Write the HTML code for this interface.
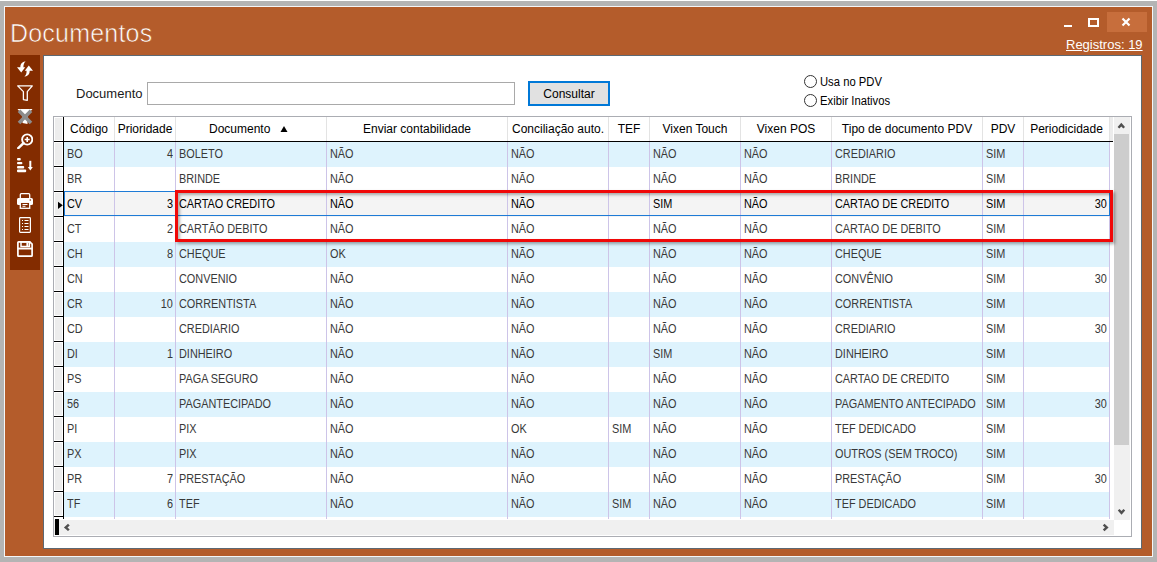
<!DOCTYPE html>
<html><head><meta charset="utf-8">
<style>
*{margin:0;padding:0;box-sizing:border-box;}
html,body{width:1157px;height:562px;overflow:hidden;background:#b4b4b4;font-family:"Liberation Sans",sans-serif;}
.a{position:absolute;}
#win{left:4px;top:6px;width:1149px;height:551px;border:1px solid #f4f6f8;background:#b45c2b;}
#title{left:10px;top:16.5px;font-size:25px;letter-spacing:0.2px;color:#fff;line-height:32px;white-space:nowrap;-webkit-text-stroke:0.6px #b45c2b;}
#reg{left:1066px;top:37px;font-size:13px;color:#fff;line-height:15px;text-decoration:underline;white-space:nowrap;}
#side{left:10px;top:55px;width:30px;height:215px;background:#832c00;}
#panel{left:43px;top:55px;width:1099px;height:494px;background:#fff;border:1px solid #5d6872;}
.lbl{font-size:13px;color:#1a1a1a;white-space:nowrap;line-height:15px;}
.cell{font-size:12.5px;color:#383838;white-space:nowrap;line-height:14px;}
.cell span{display:inline-block;transform:scaleX(0.87);transform-origin:0 0;}
.cell.r span{transform-origin:100% 0;}
.hd{font-size:12px;color:#000;white-space:nowrap;line-height:14px;text-align:center;}
</style></head><body>
<div class="a" style="left:0;top:0;width:1157px;height:1px;background:#fff;"></div>
<div id="win" class="a"></div>
<div id="title" class="a">Documentos</div>
<div id="reg" class="a">Registros: 19</div>

<div class="a" style="left:1107px;top:12px;width:40px;height:20px;background:#c76e3c;"></div>
<div class="a" style="left:1064px;top:25px;width:8px;height:2px;background:#fff;"></div>
<div class="a" style="left:1088px;top:18px;width:11px;height:9px;border:2px solid #fff;border-width:2px 2px 2px 2px;"></div>
<svg class="a" style="left:1121px;top:17px" width="10" height="10" viewBox="0 0 10 10"><path d="M1.5 1.5L8.5 8.5M8.5 1.5L1.5 8.5" stroke="#fff" stroke-width="2.2"/></svg>
<div id="side" class="a"></div>
<svg class="a" style="left:17px;top:61px" width="16" height="16" viewBox="0 0 16 16">
<path d="M8.6 0.2 C5 1, 3.2 3, 3.3 6.3 L0 6.3 L4.2 11.4 L8.2 6.3 L6.4 6.3 C6.4 3.5, 7 2, 8.6 0.2 Z" fill="#fff"/>
<path d="M7.4 15.8 C11 15, 12.8 13, 12.7 9.7 L16 9.7 L11.8 4.6 L7.8 9.7 L9.6 9.7 C9.6 12.5, 9 14, 7.4 15.8 Z" fill="#fff"/>
</svg>
<svg class="a" style="left:17px;top:85px" width="16" height="16" viewBox="0 0 16 16">
<path d="M0.7 0.9 H15.3 L10.3 6.6 V15.3 L6.4 14.6 V6.6 Z" fill="none" stroke="#fff" stroke-width="1.3" stroke-linejoin="round"/>
</svg>
<svg class="a" style="left:17px;top:109px" width="16" height="16" viewBox="0 0 16 16">
<path d="M0.5 0 H15.5 L10.5 6 V15 L5.5 14 V6 Z" fill="#fff"/>
<path d="M2 1.8 L14 14 M14 1.8 L2 14" stroke="#8c8c8c" stroke-width="3.6"/>
</svg>
<svg class="a" style="left:17px;top:133px" width="16" height="16" viewBox="0 0 16 16">
<circle cx="10.2" cy="6.5" r="5.1" fill="none" stroke="#fff" stroke-width="1.9"/>
<path d="M10.2 4 V9 M7.7 6.5 H12.7" stroke="#fff" stroke-width="1.6"/>
<path d="M6.5 10.1 L1.3 15.1" stroke="#fff" stroke-width="2.5" stroke-linecap="round"/>
</svg>
<svg class="a" style="left:17px;top:157px" width="16" height="16" viewBox="0 0 16 16">
<rect x="0" y="1" width="3.8" height="2.4" rx="1" fill="#fff"/>
<rect x="0" y="4.9" width="5.4" height="2.4" rx="1" fill="#fff"/>
<rect x="0" y="9" width="7.2" height="2.4" rx="1" fill="#fff"/>
<rect x="0" y="12.6" width="9.2" height="2.6" rx="1" fill="#fff"/>
<path d="M13.3 3.8 V11" stroke="#fff" stroke-width="2"/>
<path d="M10.8 10 L13.3 13.5 L15.8 10 Z" fill="#fff"/>
</svg>
<svg class="a" style="left:17px;top:193px" width="16" height="16" viewBox="0 0 16 16">
<rect x="3.3" y="0.7" width="9.4" height="6" rx="1" fill="none" stroke="#fff" stroke-width="1.3"/>
<rect x="0" y="5" width="16" height="7" rx="1.5" fill="#fff"/>
<rect x="3.3" y="9.3" width="9.4" height="6" fill="#832c00" stroke="#fff" stroke-width="1.3"/>
<path d="M5.5 11.5 H10.5 M5.5 13.3 H8.5" stroke="#fff" stroke-width="1"/>
<circle cx="13.3" cy="7" r="0.8" fill="#832c00"/>
</svg>
<svg class="a" style="left:17px;top:217px" width="16" height="16" viewBox="0 0 16 16">
<rect x="2.6" y="0.6" width="10.8" height="14.8" rx="0.8" fill="none" stroke="#fff" stroke-width="1.2"/>
<path d="M5 3.5 H6 M7.5 3.5 H11.5 M5 6.5 H6 M7.5 6.5 H11.5 M5 9.5 H6 M7.5 9.5 H11.5 M5 12.5 H6 M7.5 12.5 H11.5" stroke="#fff" stroke-width="1.1"/>
</svg>
<svg class="a" style="left:17px;top:241px" width="16" height="16" viewBox="0 0 16 16">
<path d="M1.6 0.9 H12.8 L15.1 3.2 V14.4 Q15.1 15.1 14.4 15.1 H1.6 Q0.9 15.1 0.9 14.4 V1.6 Q0.9 0.9 1.6 0.9Z" fill="none" stroke="#fff" stroke-width="1.7"/>
<rect x="4" y="0.9" width="8.4" height="4.6" fill="none" stroke="#fff" stroke-width="1.5"/>
<rect x="9.4" y="1.6" width="1.9" height="3.4" fill="#fff"/>
<rect x="0.9" y="6.6" width="14.2" height="1.9" fill="#fff"/>
</svg>
<div id="panel" class="a"></div>
<div class="a lbl" style="left:76px;top:86px;">Documento</div>
<div class="a" style="left:147px;top:82px;width:368px;height:23px;border:1px solid #a9a9a9;background:#fff;"></div>
<div class="a" style="left:528px;top:81px;width:82px;height:25px;border:2px solid #0078d7;background:#e1e1e1;"></div>
<div class="a" style="left:528px;top:87px;width:82px;text-align:center;font-size:12px;line-height:15px;color:#000;">Consultar</div>
<div class="a" style="left:804px;top:75px;width:13px;height:13px;border:1px solid #333;border-radius:50%;background:#fff;"></div>
<div class="a" style="left:820px;top:75px;font-size:12.5px;line-height:15px;color:#000;white-space:nowrap;transform:scaleX(0.9);transform-origin:0 0;">Usa no PDV</div>
<div class="a" style="left:804px;top:94px;width:13px;height:13px;border:1px solid #333;border-radius:50%;background:#fff;"></div>
<div class="a" style="left:820px;top:94px;font-size:12.5px;line-height:15px;color:#000;white-space:nowrap;transform:scaleX(0.9);transform-origin:0 0;">Exibir Inativos</div>
<div class="a" style="left:53px;top:116px;width:1079px;height:421px;border:1px solid #abadb3;background:#fff;"></div>
<div class="a" style="left:54px;top:117px;width:9px;height:402px;background:#fff;"></div>
<div class="a" style="left:54px;top:117px;width:9px;height:24px;background:#ededed;border:1px solid #fff;"></div>
<div class="a" style="left:63px;top:117px;width:1px;height:402px;background:#000;"></div>
<div class="a" style="left:54px;top:141px;width:1059px;height:1px;background:#000;"></div>
<div class="a" style="left:1110px;top:117px;width:3px;height:24px;background:#ececec;"></div>
<div class="a hd" style="left:64px;top:122px;width:50px;">Código</div>
<div class="a" style="left:114px;top:117px;width:1px;height:24px;background:#e3e3e3;"></div>
<div class="a hd" style="left:115px;top:122px;width:60px;">Prioridade</div>
<div class="a" style="left:175px;top:117px;width:1px;height:24px;background:#e3e3e3;"></div>
<div class="a hd" style="left:209px;top:122px;text-align:left;">Documento</div>
<div class="a" style="left:326px;top:117px;width:1px;height:24px;background:#e3e3e3;"></div>
<div class="a hd" style="left:327px;top:122px;width:180px;">Enviar contabilidade</div>
<div class="a" style="left:507px;top:117px;width:1px;height:24px;background:#e3e3e3;"></div>
<div class="a hd" style="left:508px;top:122px;width:100px;">Conciliação auto.</div>
<div class="a" style="left:608px;top:117px;width:1px;height:24px;background:#e3e3e3;"></div>
<div class="a hd" style="left:609px;top:122px;width:40px;">TEF</div>
<div class="a" style="left:649px;top:117px;width:1px;height:24px;background:#e3e3e3;"></div>
<div class="a hd" style="left:650px;top:122px;width:90px;">Vixen Touch</div>
<div class="a" style="left:740px;top:117px;width:1px;height:24px;background:#e3e3e3;"></div>
<div class="a hd" style="left:741px;top:122px;width:90px;">Vixen POS</div>
<div class="a" style="left:831px;top:117px;width:1px;height:24px;background:#e3e3e3;"></div>
<div class="a hd" style="left:832px;top:122px;width:150px;">Tipo de documento PDV</div>
<div class="a" style="left:982px;top:117px;width:1px;height:24px;background:#e3e3e3;"></div>
<div class="a hd" style="left:983px;top:122px;width:40px;">PDV</div>
<div class="a" style="left:1023px;top:117px;width:1px;height:24px;background:#e3e3e3;"></div>
<div class="a hd" style="left:1024px;top:122px;width:85px;">Periodicidade</div>
<div class="a" style="left:1109px;top:117px;width:1px;height:24px;background:#e3e3e3;"></div>
<svg class="a" style="left:280px;top:126px" width="8" height="6" viewBox="0 0 8 6"><path d="M4 0 L7.5 6 H0.5Z" fill="#000"/></svg>
<div class="a" style="left:64px;top:142px;width:1045px;height:25px;background:#def3fd;"></div>
<div class="a" style="left:54px;top:142px;width:9px;height:24px;background:#ededed;border:1px solid #fff;"></div>
<div class="a" style="left:54px;top:166px;width:9px;height:1px;background:#000;"></div>
<div class="a cell" style="left:66.5px;top:147px;width:48px;color:#383838;"><span>BO</span></div>
<div class="a cell r" style="left:115px;top:147px;width:58px;text-align:right;color:#383838;"><span>4</span></div>
<div class="a cell" style="left:178.5px;top:147px;width:148px;color:#383838;"><span>BOLETO</span></div>
<div class="a cell" style="left:329.5px;top:147px;width:178px;color:#383838;"><span>NÃO</span></div>
<div class="a cell" style="left:510.5px;top:147px;width:98px;color:#383838;"><span>NÃO</span></div>
<div class="a cell" style="left:652.5px;top:147px;width:88px;color:#383838;"><span>NÃO</span></div>
<div class="a cell" style="left:743.5px;top:147px;width:88px;color:#383838;"><span>NÃO</span></div>
<div class="a cell" style="left:834.5px;top:147px;width:148px;color:#383838;"><span>CREDIARIO</span></div>
<div class="a cell" style="left:985.5px;top:147px;width:38px;color:#383838;"><span>SIM</span></div>
<div class="a" style="left:64px;top:167px;width:1045px;height:25px;background:#ffffff;"></div>
<div class="a" style="left:54px;top:167px;width:9px;height:24px;background:#ededed;border:1px solid #fff;"></div>
<div class="a" style="left:54px;top:191px;width:9px;height:1px;background:#000;"></div>
<div class="a cell" style="left:66.5px;top:172px;width:48px;color:#383838;"><span>BR</span></div>
<div class="a cell" style="left:178.5px;top:172px;width:148px;color:#383838;"><span>BRINDE</span></div>
<div class="a cell" style="left:329.5px;top:172px;width:178px;color:#383838;"><span>NÃO</span></div>
<div class="a cell" style="left:510.5px;top:172px;width:98px;color:#383838;"><span>NÃO</span></div>
<div class="a cell" style="left:652.5px;top:172px;width:88px;color:#383838;"><span>NÃO</span></div>
<div class="a cell" style="left:743.5px;top:172px;width:88px;color:#383838;"><span>NÃO</span></div>
<div class="a cell" style="left:834.5px;top:172px;width:148px;color:#383838;"><span>BRINDE</span></div>
<div class="a cell" style="left:985.5px;top:172px;width:38px;color:#383838;"><span>SIM</span></div>
<div class="a" style="left:64px;top:192px;width:1045px;height:25px;background:#f4f4f4;"></div>
<div class="a" style="left:54px;top:192px;width:9px;height:24px;background:#ededed;border:1px solid #fff;"></div>
<div class="a" style="left:54px;top:216px;width:9px;height:1px;background:#000;"></div>
<div class="a cell" style="left:66.5px;top:197px;width:48px;color:#000;"><span>CV</span></div>
<div class="a cell r" style="left:115px;top:197px;width:58px;text-align:right;color:#000;"><span>3</span></div>
<div class="a cell" style="left:178.5px;top:197px;width:148px;color:#000;"><span>CARTAO CREDITO</span></div>
<div class="a cell" style="left:329.5px;top:197px;width:178px;color:#000;"><span>NÃO</span></div>
<div class="a cell" style="left:510.5px;top:197px;width:98px;color:#000;"><span>NÃO</span></div>
<div class="a cell" style="left:652.5px;top:197px;width:88px;color:#000;"><span>SIM</span></div>
<div class="a cell" style="left:743.5px;top:197px;width:88px;color:#000;"><span>NÃO</span></div>
<div class="a cell" style="left:834.5px;top:197px;width:148px;color:#000;"><span>CARTAO DE CREDITO</span></div>
<div class="a cell" style="left:985.5px;top:197px;width:38px;color:#000;"><span>SIM</span></div>
<div class="a cell r" style="left:1024px;top:197px;width:83px;text-align:right;color:#000;"><span>30</span></div>
<div class="a" style="left:64px;top:217px;width:1045px;height:25px;background:#ffffff;"></div>
<div class="a" style="left:54px;top:217px;width:9px;height:24px;background:#ededed;border:1px solid #fff;"></div>
<div class="a" style="left:54px;top:241px;width:9px;height:1px;background:#000;"></div>
<div class="a cell" style="left:66.5px;top:222px;width:48px;color:#383838;"><span>CT</span></div>
<div class="a cell r" style="left:115px;top:222px;width:58px;text-align:right;color:#383838;"><span>2</span></div>
<div class="a cell" style="left:178.5px;top:222px;width:148px;color:#383838;"><span>CARTÃO DEBITO</span></div>
<div class="a cell" style="left:329.5px;top:222px;width:178px;color:#383838;"><span>NÃO</span></div>
<div class="a cell" style="left:510.5px;top:222px;width:98px;color:#383838;"><span>NÃO</span></div>
<div class="a cell" style="left:652.5px;top:222px;width:88px;color:#383838;"><span>NÃO</span></div>
<div class="a cell" style="left:743.5px;top:222px;width:88px;color:#383838;"><span>NÃO</span></div>
<div class="a cell" style="left:834.5px;top:222px;width:148px;color:#383838;"><span>CARTAO DE DEBITO</span></div>
<div class="a cell" style="left:985.5px;top:222px;width:38px;color:#383838;"><span>SIM</span></div>
<div class="a" style="left:64px;top:242px;width:1045px;height:25px;background:#def3fd;"></div>
<div class="a" style="left:54px;top:242px;width:9px;height:24px;background:#ededed;border:1px solid #fff;"></div>
<div class="a" style="left:54px;top:266px;width:9px;height:1px;background:#000;"></div>
<div class="a cell" style="left:66.5px;top:247px;width:48px;color:#383838;"><span>CH</span></div>
<div class="a cell r" style="left:115px;top:247px;width:58px;text-align:right;color:#383838;"><span>8</span></div>
<div class="a cell" style="left:178.5px;top:247px;width:148px;color:#383838;"><span>CHEQUE</span></div>
<div class="a cell" style="left:329.5px;top:247px;width:178px;color:#383838;"><span>OK</span></div>
<div class="a cell" style="left:510.5px;top:247px;width:98px;color:#383838;"><span>NÃO</span></div>
<div class="a cell" style="left:652.5px;top:247px;width:88px;color:#383838;"><span>NÃO</span></div>
<div class="a cell" style="left:743.5px;top:247px;width:88px;color:#383838;"><span>NÃO</span></div>
<div class="a cell" style="left:834.5px;top:247px;width:148px;color:#383838;"><span>CHEQUE</span></div>
<div class="a cell" style="left:985.5px;top:247px;width:38px;color:#383838;"><span>SIM</span></div>
<div class="a" style="left:64px;top:267px;width:1045px;height:25px;background:#ffffff;"></div>
<div class="a" style="left:54px;top:267px;width:9px;height:24px;background:#ededed;border:1px solid #fff;"></div>
<div class="a" style="left:54px;top:291px;width:9px;height:1px;background:#000;"></div>
<div class="a cell" style="left:66.5px;top:272px;width:48px;color:#383838;"><span>CN</span></div>
<div class="a cell" style="left:178.5px;top:272px;width:148px;color:#383838;"><span>CONVENIO</span></div>
<div class="a cell" style="left:329.5px;top:272px;width:178px;color:#383838;"><span>NÃO</span></div>
<div class="a cell" style="left:510.5px;top:272px;width:98px;color:#383838;"><span>NÃO</span></div>
<div class="a cell" style="left:652.5px;top:272px;width:88px;color:#383838;"><span>NÃO</span></div>
<div class="a cell" style="left:743.5px;top:272px;width:88px;color:#383838;"><span>NÃO</span></div>
<div class="a cell" style="left:834.5px;top:272px;width:148px;color:#383838;"><span>CONVÊNIO</span></div>
<div class="a cell" style="left:985.5px;top:272px;width:38px;color:#383838;"><span>SIM</span></div>
<div class="a cell r" style="left:1024px;top:272px;width:83px;text-align:right;color:#383838;"><span>30</span></div>
<div class="a" style="left:64px;top:292px;width:1045px;height:25px;background:#def3fd;"></div>
<div class="a" style="left:54px;top:292px;width:9px;height:24px;background:#ededed;border:1px solid #fff;"></div>
<div class="a" style="left:54px;top:316px;width:9px;height:1px;background:#000;"></div>
<div class="a cell" style="left:66.5px;top:297px;width:48px;color:#383838;"><span>CR</span></div>
<div class="a cell r" style="left:115px;top:297px;width:58px;text-align:right;color:#383838;"><span>10</span></div>
<div class="a cell" style="left:178.5px;top:297px;width:148px;color:#383838;"><span>CORRENTISTA</span></div>
<div class="a cell" style="left:329.5px;top:297px;width:178px;color:#383838;"><span>NÃO</span></div>
<div class="a cell" style="left:510.5px;top:297px;width:98px;color:#383838;"><span>NÃO</span></div>
<div class="a cell" style="left:652.5px;top:297px;width:88px;color:#383838;"><span>NÃO</span></div>
<div class="a cell" style="left:743.5px;top:297px;width:88px;color:#383838;"><span>NÃO</span></div>
<div class="a cell" style="left:834.5px;top:297px;width:148px;color:#383838;"><span>CORRENTISTA</span></div>
<div class="a cell" style="left:985.5px;top:297px;width:38px;color:#383838;"><span>SIM</span></div>
<div class="a" style="left:64px;top:317px;width:1045px;height:25px;background:#ffffff;"></div>
<div class="a" style="left:54px;top:317px;width:9px;height:24px;background:#ededed;border:1px solid #fff;"></div>
<div class="a" style="left:54px;top:341px;width:9px;height:1px;background:#000;"></div>
<div class="a cell" style="left:66.5px;top:322px;width:48px;color:#383838;"><span>CD</span></div>
<div class="a cell" style="left:178.5px;top:322px;width:148px;color:#383838;"><span>CREDIARIO</span></div>
<div class="a cell" style="left:329.5px;top:322px;width:178px;color:#383838;"><span>NÃO</span></div>
<div class="a cell" style="left:510.5px;top:322px;width:98px;color:#383838;"><span>NÃO</span></div>
<div class="a cell" style="left:652.5px;top:322px;width:88px;color:#383838;"><span>NÃO</span></div>
<div class="a cell" style="left:743.5px;top:322px;width:88px;color:#383838;"><span>NÃO</span></div>
<div class="a cell" style="left:834.5px;top:322px;width:148px;color:#383838;"><span>CREDIARIO</span></div>
<div class="a cell" style="left:985.5px;top:322px;width:38px;color:#383838;"><span>SIM</span></div>
<div class="a cell r" style="left:1024px;top:322px;width:83px;text-align:right;color:#383838;"><span>30</span></div>
<div class="a" style="left:64px;top:342px;width:1045px;height:25px;background:#def3fd;"></div>
<div class="a" style="left:54px;top:342px;width:9px;height:24px;background:#ededed;border:1px solid #fff;"></div>
<div class="a" style="left:54px;top:366px;width:9px;height:1px;background:#000;"></div>
<div class="a cell" style="left:66.5px;top:347px;width:48px;color:#383838;"><span>DI</span></div>
<div class="a cell r" style="left:115px;top:347px;width:58px;text-align:right;color:#383838;"><span>1</span></div>
<div class="a cell" style="left:178.5px;top:347px;width:148px;color:#383838;"><span>DINHEIRO</span></div>
<div class="a cell" style="left:329.5px;top:347px;width:178px;color:#383838;"><span>NÃO</span></div>
<div class="a cell" style="left:510.5px;top:347px;width:98px;color:#383838;"><span>NÃO</span></div>
<div class="a cell" style="left:652.5px;top:347px;width:88px;color:#383838;"><span>SIM</span></div>
<div class="a cell" style="left:743.5px;top:347px;width:88px;color:#383838;"><span>NÃO</span></div>
<div class="a cell" style="left:834.5px;top:347px;width:148px;color:#383838;"><span>DINHEIRO</span></div>
<div class="a cell" style="left:985.5px;top:347px;width:38px;color:#383838;"><span>SIM</span></div>
<div class="a" style="left:64px;top:367px;width:1045px;height:25px;background:#ffffff;"></div>
<div class="a" style="left:54px;top:367px;width:9px;height:24px;background:#ededed;border:1px solid #fff;"></div>
<div class="a" style="left:54px;top:391px;width:9px;height:1px;background:#000;"></div>
<div class="a cell" style="left:66.5px;top:372px;width:48px;color:#383838;"><span>PS</span></div>
<div class="a cell" style="left:178.5px;top:372px;width:148px;color:#383838;"><span>PAGA SEGURO</span></div>
<div class="a cell" style="left:329.5px;top:372px;width:178px;color:#383838;"><span>NÃO</span></div>
<div class="a cell" style="left:510.5px;top:372px;width:98px;color:#383838;"><span>NÃO</span></div>
<div class="a cell" style="left:652.5px;top:372px;width:88px;color:#383838;"><span>NÃO</span></div>
<div class="a cell" style="left:743.5px;top:372px;width:88px;color:#383838;"><span>NÃO</span></div>
<div class="a cell" style="left:834.5px;top:372px;width:148px;color:#383838;"><span>CARTAO DE CREDITO</span></div>
<div class="a cell" style="left:985.5px;top:372px;width:38px;color:#383838;"><span>SIM</span></div>
<div class="a" style="left:64px;top:392px;width:1045px;height:25px;background:#def3fd;"></div>
<div class="a" style="left:54px;top:392px;width:9px;height:24px;background:#ededed;border:1px solid #fff;"></div>
<div class="a" style="left:54px;top:416px;width:9px;height:1px;background:#000;"></div>
<div class="a cell" style="left:66.5px;top:397px;width:48px;color:#383838;"><span>56</span></div>
<div class="a cell" style="left:178.5px;top:397px;width:148px;color:#383838;"><span>PAGANTECIPADO</span></div>
<div class="a cell" style="left:329.5px;top:397px;width:178px;color:#383838;"><span>NÃO</span></div>
<div class="a cell" style="left:510.5px;top:397px;width:98px;color:#383838;"><span>NÃO</span></div>
<div class="a cell" style="left:652.5px;top:397px;width:88px;color:#383838;"><span>NÃO</span></div>
<div class="a cell" style="left:743.5px;top:397px;width:88px;color:#383838;"><span>NÃO</span></div>
<div class="a cell" style="left:834.5px;top:397px;width:148px;color:#383838;"><span>PAGAMENTO ANTECIPADO</span></div>
<div class="a cell" style="left:985.5px;top:397px;width:38px;color:#383838;"><span>SIM</span></div>
<div class="a cell r" style="left:1024px;top:397px;width:83px;text-align:right;color:#383838;"><span>30</span></div>
<div class="a" style="left:64px;top:417px;width:1045px;height:25px;background:#ffffff;"></div>
<div class="a" style="left:54px;top:417px;width:9px;height:24px;background:#ededed;border:1px solid #fff;"></div>
<div class="a" style="left:54px;top:441px;width:9px;height:1px;background:#000;"></div>
<div class="a cell" style="left:66.5px;top:422px;width:48px;color:#383838;"><span>PI</span></div>
<div class="a cell" style="left:178.5px;top:422px;width:148px;color:#383838;"><span>PIX</span></div>
<div class="a cell" style="left:329.5px;top:422px;width:178px;color:#383838;"><span>NÃO</span></div>
<div class="a cell" style="left:510.5px;top:422px;width:98px;color:#383838;"><span>OK</span></div>
<div class="a cell" style="left:611.5px;top:422px;width:38px;color:#383838;"><span>SIM</span></div>
<div class="a cell" style="left:652.5px;top:422px;width:88px;color:#383838;"><span>NÃO</span></div>
<div class="a cell" style="left:743.5px;top:422px;width:88px;color:#383838;"><span>NÃO</span></div>
<div class="a cell" style="left:834.5px;top:422px;width:148px;color:#383838;"><span>TEF DEDICADO</span></div>
<div class="a cell" style="left:985.5px;top:422px;width:38px;color:#383838;"><span>SIM</span></div>
<div class="a" style="left:64px;top:442px;width:1045px;height:25px;background:#def3fd;"></div>
<div class="a" style="left:54px;top:442px;width:9px;height:24px;background:#ededed;border:1px solid #fff;"></div>
<div class="a" style="left:54px;top:466px;width:9px;height:1px;background:#000;"></div>
<div class="a cell" style="left:66.5px;top:447px;width:48px;color:#383838;"><span>PX</span></div>
<div class="a cell" style="left:178.5px;top:447px;width:148px;color:#383838;"><span>PIX</span></div>
<div class="a cell" style="left:329.5px;top:447px;width:178px;color:#383838;"><span>NÃO</span></div>
<div class="a cell" style="left:510.5px;top:447px;width:98px;color:#383838;"><span>NÃO</span></div>
<div class="a cell" style="left:652.5px;top:447px;width:88px;color:#383838;"><span>NÃO</span></div>
<div class="a cell" style="left:743.5px;top:447px;width:88px;color:#383838;"><span>NÃO</span></div>
<div class="a cell" style="left:834.5px;top:447px;width:148px;color:#383838;"><span>OUTROS (SEM TROCO)</span></div>
<div class="a cell" style="left:985.5px;top:447px;width:38px;color:#383838;"><span>SIM</span></div>
<div class="a" style="left:64px;top:467px;width:1045px;height:25px;background:#ffffff;"></div>
<div class="a" style="left:54px;top:467px;width:9px;height:24px;background:#ededed;border:1px solid #fff;"></div>
<div class="a" style="left:54px;top:491px;width:9px;height:1px;background:#000;"></div>
<div class="a cell" style="left:66.5px;top:472px;width:48px;color:#383838;"><span>PR</span></div>
<div class="a cell r" style="left:115px;top:472px;width:58px;text-align:right;color:#383838;"><span>7</span></div>
<div class="a cell" style="left:178.5px;top:472px;width:148px;color:#383838;"><span>PRESTAÇÃO</span></div>
<div class="a cell" style="left:329.5px;top:472px;width:178px;color:#383838;"><span>NÃO</span></div>
<div class="a cell" style="left:510.5px;top:472px;width:98px;color:#383838;"><span>NÃO</span></div>
<div class="a cell" style="left:652.5px;top:472px;width:88px;color:#383838;"><span>NÃO</span></div>
<div class="a cell" style="left:743.5px;top:472px;width:88px;color:#383838;"><span>NÃO</span></div>
<div class="a cell" style="left:834.5px;top:472px;width:148px;color:#383838;"><span>PRESTAÇÃO</span></div>
<div class="a cell" style="left:985.5px;top:472px;width:38px;color:#383838;"><span>SIM</span></div>
<div class="a cell r" style="left:1024px;top:472px;width:83px;text-align:right;color:#383838;"><span>30</span></div>
<div class="a" style="left:64px;top:492px;width:1045px;height:25px;background:#def3fd;"></div>
<div class="a" style="left:54px;top:492px;width:9px;height:24px;background:#ededed;border:1px solid #fff;"></div>
<div class="a" style="left:54px;top:516px;width:9px;height:1px;background:#000;"></div>
<div class="a cell" style="left:66.5px;top:497px;width:48px;color:#383838;"><span>TF</span></div>
<div class="a cell r" style="left:115px;top:497px;width:58px;text-align:right;color:#383838;"><span>6</span></div>
<div class="a cell" style="left:178.5px;top:497px;width:148px;color:#383838;"><span>TEF</span></div>
<div class="a cell" style="left:329.5px;top:497px;width:178px;color:#383838;"><span>NÃO</span></div>
<div class="a cell" style="left:510.5px;top:497px;width:98px;color:#383838;"><span>NÃO</span></div>
<div class="a cell" style="left:611.5px;top:497px;width:38px;color:#383838;"><span>SIM</span></div>
<div class="a cell" style="left:652.5px;top:497px;width:88px;color:#383838;"><span>NÃO</span></div>
<div class="a cell" style="left:743.5px;top:497px;width:88px;color:#383838;"><span>NÃO</span></div>
<div class="a cell" style="left:834.5px;top:497px;width:148px;color:#383838;"><span>TEF DEDICADO</span></div>
<div class="a cell" style="left:985.5px;top:497px;width:38px;color:#383838;"><span>SIM</span></div>
<div class="a" style="left:114px;top:142px;width:1px;height:377px;background:#cdc4e8;"></div>
<div class="a" style="left:175px;top:142px;width:1px;height:377px;background:#cdc4e8;"></div>
<div class="a" style="left:326px;top:142px;width:1px;height:377px;background:#cdc4e8;"></div>
<div class="a" style="left:507px;top:142px;width:1px;height:377px;background:#cdc4e8;"></div>
<div class="a" style="left:608px;top:142px;width:1px;height:377px;background:#cdc4e8;"></div>
<div class="a" style="left:649px;top:142px;width:1px;height:377px;background:#cdc4e8;"></div>
<div class="a" style="left:740px;top:142px;width:1px;height:377px;background:#cdc4e8;"></div>
<div class="a" style="left:831px;top:142px;width:1px;height:377px;background:#cdc4e8;"></div>
<div class="a" style="left:982px;top:142px;width:1px;height:377px;background:#cdc4e8;"></div>
<div class="a" style="left:1023px;top:142px;width:1px;height:377px;background:#cdc4e8;"></div>
<div class="a" style="left:1109px;top:142px;width:1px;height:377px;background:#cdc4e8;"></div>
<div class="a" style="left:64px;top:191px;width:1046px;height:25px;border:1px solid #1e7bd6;border-left-width:1px;"></div>
<svg class="a" style="left:58px;top:201px" width="6" height="9" viewBox="0 0 6 9"><path d="M0 0.7 L4.8 4.3 L0 7.9Z" fill="#000"/></svg>
<div class="a" style="left:1114px;top:117px;width:16px;height:403px;background:#f0f0f0;"></div>
<div class="a" style="left:1114px;top:134px;width:15px;height:311px;background:#cdcdcd;"></div>
<svg class="a" style="left:1117px;top:122px" width="10" height="8"><path transform="translate(0.6,0.8)" d="M0 4.1 L1.7 5.8 L3.7 3.6 L5.7 5.8 L7.4 4.1 L3.7 0Z" fill="#4f4f4f"/></svg>
<svg class="a" style="left:1117px;top:508px" width="10" height="8"><path transform="translate(0.8,0.9)" d="M0 1.7 L1.7 0 L3.7 2.2 L5.7 0 L7.4 1.7 L3.7 5.8Z" fill="#4f4f4f"/></svg>
<div class="a" style="left:54px;top:520px;width:1060px;height:15px;background:#f0f0f0;"></div>
<div class="a" style="left:55px;top:519px;width:4px;height:16px;background:#000;"></div>
<svg class="a" style="left:63px;top:523px" width="8" height="10"><path transform="translate(0.9,0.7)" d="M4.1 0 L5.8 1.7 L3.6 3.7 L5.8 5.7 L4.1 7.4 L0 3.7Z" fill="#4f4f4f"/></svg>
<svg class="a" style="left:1102px;top:523px" width="8" height="10"><path transform="translate(0.8,0.8)" d="M1.7 0 L0 1.7 L2.2 3.7 L0 5.7 L1.7 7.4 L5.8 3.7Z" fill="#4f4f4f"/></svg>
<div class="a" style="left:175px;top:190px;width:938px;height:52px;border:3px solid #f00808;box-shadow:2px 2px 3px rgba(0,0,0,0.35), inset 2px 2px 3px rgba(0,0,0,0.3);"></div>
</body></html>
